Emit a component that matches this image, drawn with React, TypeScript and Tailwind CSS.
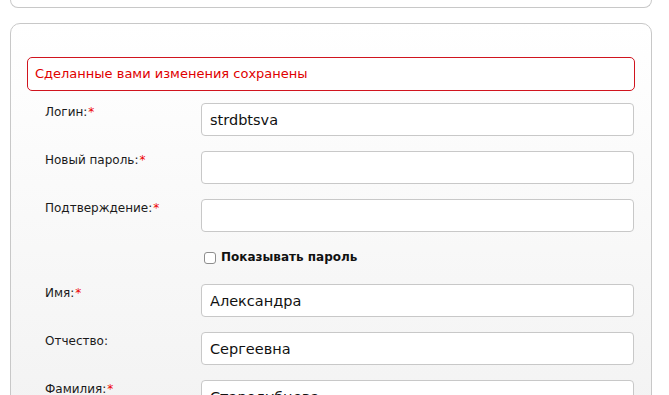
import React from 'react';

const Row: React.FC<{ label: string; required?: boolean; value?: string }> = ({ label, required, value }) => (
  <div className="flex items-start h-[48px]">
    <div className="w-[174px] shrink-0 pl-[18px] pt-[1px] text-[12px] leading-[16px] text-[#1a1a1a]">
      {label}
      {required && <span className="text-[#e00] ml-[1px]">*</span>}
    </div>
    <input
      readOnly
      value={value ?? ''}
      className="w-[433px] h-[33px] bg-white border border-[#c8c8c8] rounded-[4px] px-[8px] text-[14.5px] text-[#111] outline-none"
    />
  </div>
);

export default function App() {
  return (
    <div className="w-[669px] h-[395px] bg-white overflow-hidden font-['DejaVu_Sans',Verdana,sans-serif]">
      <div className="h-[8px] ml-[10px] mr-[17px] border border-t-0 border-[#c8c8c8] rounded-b-[10px] bg-white" />

      <div className="mt-[15px] ml-[10px] mr-[17px] h-[420px] border border-[#c8c8c8] rounded-[10px] bg-gradient-to-b from-white to-[#f2f2f2] pt-[33px] pl-[16px] pr-[16px]">
        <div className="h-[34px] border border-[#d0141e] rounded-[5px] bg-white flex items-center pl-[7px] text-[13px] text-[#e00000]">
          Сделанные вами изменения сохранены
        </div>

        <div className="mt-[12px] flex flex-col">
          <Row label="Логин:" required value="strdbtsva" />
          <Row label="Новый пароль:" required />
          <Row label="Подтверждение:" required />

          <div className="h-[37px] flex items-start pl-[177px] pt-[1px]">
            <label className="flex items-center gap-[5px] text-[12px] font-bold text-[#111]">
              <span className="w-[12px] h-[12px] border border-[#8e8e8e] rounded-[3px] bg-white mt-[2px]" />
              Показывать пароль
            </label>
          </div>

          <Row label="Имя:" required value="Александра" />
          <Row label="Отчество:" value="Сергеевна" />
          <Row label="Фамилия:" required value="Стародубцева" />
        </div>
      </div>
    </div>
  );
}
